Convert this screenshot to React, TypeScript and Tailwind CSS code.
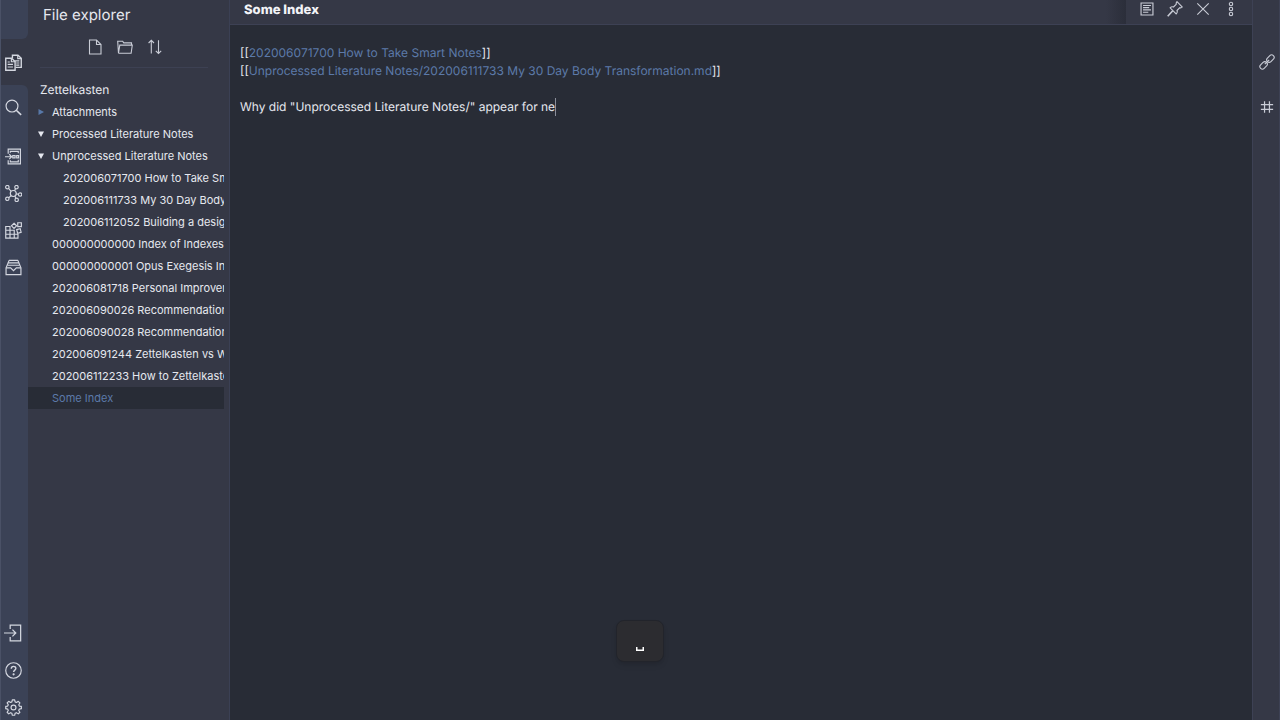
import type { ReactNode } from "react"

type IconProps = { children: ReactNode; className?: string }

function Icon({ children, className = "size-4" }: IconProps) {
  return (
    <svg
      viewBox="0 0 16 16"
      className={className}
      fill="none"
      stroke="currentColor"
      strokeWidth="1.1"
      aria-hidden="true"
    >
      {children}
    </svg>
  )
}

function FilesIcon() {
  return (
    <Icon className="size-[17px]">
      <path d="M7 4V1.200h5.200L15.300 4v8.600H10" strokeWidth="1.300" />
      <path d="M12 1.200V4.300h3.300M9.500 6.500h4M10.500 8.500h3M10.500 10.500h3" />
      <path d="M.7 4h5.500L9.500 7v8.300H.7z" strokeWidth="1.300" />
      <path d="M6 4v3.300h3.400M2.500 7.500h2M2.500 9.800h5M2.500 12.200h5" />
    </Icon>
  )
}

function SearchIcon() {
  return (
    <Icon className="size-[17px]">
      <circle cx="6.600" cy="6.600" r="5.600" />
      <path d="m10.600 10.600 4.600 4.400" strokeWidth="1.500" />
    </Icon>
  )
}

function SwitcherIcon() {
  return (
    <Icon className="size-[17px]">
      <path d="M3 5.500V1h11.500v14H3v-3.500M5 4.500V3.200h7.500v1.800M5 11.500v1.500h7.500v-2" />
      <path d="M0 8.200h6M4 5.900l2.300 2.300L4 10.500" />
      <path d="M7.300 7.100h2.200v2.200H7.300zM11 7.100h1.800v2.200H11z" />
    </Icon>
  )
}

function GraphIcon() {
  return (
    <Icon className="size-[17px]">
      <circle cx="7.800" cy="8" r="2.800" />
      <circle cx="2.200" cy="2" r="1.600" />
      <circle cx="10.800" cy="2" r="1.600" />
      <circle cx="14.200" cy="9" r="1.600" />
      <circle cx="2.200" cy="13" r="1.600" />
      <circle cx="11" cy="14" r="1.600" />
      <path d="m3.300 3.200 2.500 2.800M10 3.400 9 5.500M10.600 8.300l2 .4M3.500 12l2.200-2M9.300 10.400l1 2.200" />
    </Icon>
  )
}

function BlocksIcon() {
  return (
    <Icon className="size-[17px]">
      <path d="M.7 4.200h4v11h-4zM.7 7.800h8v7.400M.7 11.500h11.500v3.700H.7M8.700 11.500v3.700H4.700M12.200 11.500v3.700" />
      <path d="m8.500 1.200 2.400 2.400-2.400 2.500-2.400-2.500z" />
      <path d="M12 .7h3.400v3.600H12zM11 7.200l3.300-.9.900 3.400-3.300.9z" />
    </Icon>
  )
}

function InboxIcon() {
  return (
    <Icon className="size-[17px]">
      <path d="M3.800 1.300h8.400M3 3.600h10M2.300 5.900h11.400" />
      <path d="M3.800 1.300 3 3.600M12.200 1.300l.8 2.300M3 3.600 1 8.300v6.400h14V8.300l-2-4.700" />
      <path d="M1 8.300h4.300L8 11l2.700-2.700H15" />
    </Icon>
  )
}

function VaultIcon() {
  return (
    <Icon className="size-[18px]">
      <path d="M5.500 4.500V1h9.300v14H5.500v-3.500M0 8h10.500M7.500 5l3 3-3 3" />
    </Icon>
  )
}

function HelpIcon() {
  return (
    <Icon className="size-[17px]">
      <circle cx="8" cy="8" r="7.300" />
      <path d="M5.900 6.300c0-3 4.400-2.800 4.300-.2 0 1.500-2.100 1.600-2.100 3.400" strokeWidth="1.300" />
      <circle cx="8.100" cy="11.600" r=".5" fill="currentColor" />
    </Icon>
  )
}

function SettingsIcon() {
  return (
    <Icon className="size-[17px]">
      <circle cx="8" cy="8" r="2.300" />
      <path
        strokeLinejoin="round"
        d="M6.900.8h2.200l.4 1.900 1.300.6 1.700-1.100 1.500 1.500-1 1.700.5 1.300 1.900.3v2.100l-1.900.4-.6 1.300 1.100 1.700-1.500 1.500-1.700-1.100-1.300.6-.4 1.800H6.900l-.4-1.800-1.300-.6-1.700 1.100L2 12.500l1.100-1.700-.6-1.300-1.800-.4V7l1.800-.3.6-1.300L2 3.700l1.500-1.500 1.700 1.100 1.300-.6z"
      />
    </Icon>
  )
}

function NewNoteIcon() {
  return (
    <Icon>
      <path d="M2.500 1h7L14 5.500V15H2.500zM9.500 1v4.500H14" />
    </Icon>
  )
}

function NewFolderIcon() {
  return (
    <Icon>
      <path d="M1.500 14.300.7 2.300h5l1 1.600h7.800v2.200M1.500 14.300h12.600l1.200-8.200H2.800L1.500 14" />
    </Icon>
  )
}

function SortIcon() {
  return (
    <Icon>
      <path d="M4.300 14.500V1.300M1.600 4l2.700-2.700L7 4M11.500 1.300v13.200M8.800 11.800l2.700 2.700 2.700-2.700" />
    </Icon>
  )
}

function PreviewIcon() {
  return (
    <Icon className="size-[14px]">
      <path d="M1.200 1.200h13.600v13.600H1.200z" strokeWidth="1.300" />
      <path d="M3.500 4h9M3.500 6.500h7M3.500 9h9M3.500 11.700h6" strokeWidth="1.400" />
    </Icon>
  )
}

function PinIcon() {
  return (
    <Icon>
      <path d="M10 .7 15.300 6c-.8.900-1.700 1-2.500.7L10 9.500c.5 1.300.2 2.500-.8 3.400L3.100 6.800c1-1 2.200-1.200 3.400-.8l2.800-2.800C9 2.300 9.200 1.500 10 .7z" />
      <path d="M5.800 9.700.7 15.300" strokeWidth="1.600" />
    </Icon>
  )
}

function CloseIcon() {
  return (
    <Icon>
      <path d="m2.300 2.300 11.400 11.400M13.700 2.300 2.300 13.700" />
    </Icon>
  )
}

function MoreIcon() {
  return (
    <Icon>
      <circle cx="8" cy="3" r="1.700" />
      <circle cx="8" cy="8" r="1.700" />
      <circle cx="8" cy="13" r="1.700" />
    </Icon>
  )
}

function LinkIcon() {
  return (
    <Icon>
      <rect x="-4.200" y="-2.500" width="8.400" height="5" rx="2.500" transform="translate(4.600 11.400) rotate(-45)" />
      <rect x="-4.200" y="-2.500" width="8.400" height="5" rx="2.500" transform="translate(11.400 4.600) rotate(-45)" />
      <path d="m5.800 10.200 4.400-4.400" />
    </Icon>
  )
}

function HashIcon() {
  return (
    <Icon className="size-[14px]">
      <path d="M5.200 1.500v13M10.800 1.500v13M1 5.200h14M1 10.800h14" strokeWidth="1.400" />
    </Icon>
  )
}

function IconButton({ label, children, className = "h-[26px] w-full" }: { label: string; children: ReactNode; className?: string }) {
  return (
    <button type="button" aria-label={label} className={`flex shrink-0 items-center justify-center ${className}`}>
      {children}
    </button>
  )
}

const files = [
  { name: "Attachments", folder: "closed" },
  { name: "Processed Literature Notes", folder: "open" },
  { name: "Unprocessed Literature Notes", folder: "open" },
  { name: "202006071700 How to Take Smart Notes", nested: true },
  { name: "202006111733 My 30 Day Body Transformation", nested: true },
  { name: "202006112052 Building a design system", nested: true },
  { name: "000000000000 Index of Indexes" },
  { name: "000000000001 Opus Exegesis Index" },
  { name: "202006081718 Personal Improvement" },
  { name: "202006090026 Recommendation" },
  { name: "202006090028 Recommendations" },
  { name: "202006091244 Zettelkasten vs Wiki" },
  { name: "202006112233 How to Zettelkasten" },
  { name: "Some Index", active: true },
]

function FileRow({ file }: { file: (typeof files)[number] }) {
  return (
    <li>
      <button
        type="button"
        className={`flex h-[22px] w-full items-center overflow-hidden text-left whitespace-nowrap ${
          file.active ? "bg-[#282c36] text-[#5c7aa9]" : ""
        }`}
      >
        <span className={`flex shrink-0 items-center pl-[10px] ${file.nested ? "w-[35px]" : "w-6"}`}>
          {file.folder && (
            <svg viewBox="0 0 6 6" className={file.folder === "closed" ? "size-[6px] text-[#5878a8]" : "size-[6px]"} fill="currentColor" aria-hidden="true">
              <path d={file.folder === "closed" ? "M.5 0 6 3 .5 6z" : "M0 .5h6L3 6z"} />
            </svg>
          )}
        </span>
        {file.name}
      </button>
    </li>
  )
}

function LeftRibbon() {
  return (
    <nav aria-label="Ribbon" className="flex w-7 shrink-0 flex-col border-l border-[#4a5166] bg-[#353846] text-[#d4d7e0]">
      <div className="h-[39px] shrink-0 rounded-br-md bg-[#3b4256]" />
      <IconButton label="File explorer" className="h-[46px] w-6">
        <FilesIcon />
      </IconButton>
      <div className="flex grow flex-col rounded-tr-md bg-[#3b4256]">
        <IconButton label="Search" className="h-11 w-6">
          <SearchIcon />
        </IconButton>
        <div className="flex w-6 flex-col gap-[11px] pt-[14px]">
          <IconButton label="Quick switcher"><SwitcherIcon /></IconButton>
          <IconButton label="Graph view"><GraphIcon /></IconButton>
          <IconButton label="Random note"><BlocksIcon /></IconButton>
          <IconButton label="Inbox"><InboxIcon /></IconButton>
        </div>
        <div className="mt-auto flex w-6 flex-col gap-[11px]">
          <IconButton label="Open another vault"><VaultIcon /></IconButton>
          <IconButton label="Help"><HelpIcon /></IconButton>
          <IconButton label="Settings"><SettingsIcon /></IconButton>
        </div>
      </div>
    </nav>
  )
}

function Explorer() {
  return (
    <aside className="flex w-[202px] shrink-0 flex-col border-r border-[#3b4054] bg-[#353846] pr-[5px]">
      <h2 className="pt-1 pl-[15px] text-[15px] leading-[22px]">File explorer</h2>
      <div className="mr-4 ml-3 flex h-[42px] items-center justify-center gap-[14px] border-b border-[#3d4153] pl-[2px] text-[#c9ccd6]">
        <IconButton label="New note" className="size-4"><NewNoteIcon /></IconButton>
        <IconButton label="New folder" className="size-4"><NewFolderIcon /></IconButton>
        <IconButton label="Change sort order" className="size-4"><SortIcon /></IconButton>
      </div>
      <h3 className="pt-3 pl-3 text-[12px] leading-[20px]">Zettelkasten</h3>
      <ul className="pt-px text-[11px]">
        {files.map((file) => (
          <FileRow key={file.name} file={file} />
        ))}
      </ul>
    </aside>
  )
}

export default function App() {
  return (
    <div className="flex h-screen overflow-hidden bg-[#282c36] font-['Inter',sans-serif] text-[#e6e8ef] [text-rendering:geometricPrecision]">
      <LeftRibbon />
      <Explorer />

      <main className="flex min-w-0 grow flex-col">
        <header className="flex h-[25px] shrink-0 items-start border-b border-[#3d4154] bg-[#353846]">
          <h1 className="grow pl-[14px] text-[13px] leading-[20px] font-extrabold text-[#f2f3f7]">Some Index</h1>
          <div className="h-6 w-5 bg-linear-to-r from-[#353846] to-[#2b2e3a]" />
          <div className="flex gap-3 px-[13px] pt-px text-[#c9ccd6]">
            <IconButton label="Preview" className="size-4"><PreviewIcon /></IconButton>
            <IconButton label="Pin" className="size-4"><PinIcon /></IconButton>
            <IconButton label="Close" className="size-4"><CloseIcon /></IconButton>
            <IconButton label="More options" className="size-4"><MoreIcon /></IconButton>
          </div>
        </header>

        <div
          role="textbox"
          aria-multiline="true"
          aria-label="Note"
          className="grow px-[10px] pt-[19px] text-[12px] leading-[18px]"
        >
          <p>
            [[<a href="#smart-notes" className="text-[#5c7aa9]">202006071700 How to Take Smart Notes</a>]]
          </p>
          <p>
            [[<a href="#body-transformation" className="text-[#5c7aa9]">Unprocessed Literature Notes/202006111733 My 30 Day Body Transformation.md</a>]]
          </p>
          <p className="pt-[18px]">
            <span className="inline-block border-r border-[#8a8e9a]">Why did "Unprocessed Literature Notes/" appear for ne</span>
          </p>
        </div>
      </main>

      <nav aria-label="Right panels" className="flex w-7 shrink-0 flex-col border-x border-[#3d4154] bg-[#353846] pt-[39px] pl-[2px] text-[#c9ccd6]">
        <IconButton label="Backlinks" className="h-[46px] w-full"><LinkIcon /></IconButton>
        <IconButton label="Tags" className="h-11 w-full"><HashIcon /></IconButton>
      </nav>

      {/* pressed key overlay */}
      <div className="absolute bottom-[58px] left-1/2 flex h-[42px] w-12 -translate-x-1/2 items-center justify-center rounded-lg border border-[#22242b] bg-[#2c2c30] shadow-md">
        <svg viewBox="0 0 8 4" className="mt-4 h-1 w-2 text-white" fill="none" stroke="currentColor" strokeWidth="1.500" role="img" aria-label="Space">
          <path d="M.75 0v3.200h6.500V0" />
        </svg>
      </div>
    </div>
  )
}
